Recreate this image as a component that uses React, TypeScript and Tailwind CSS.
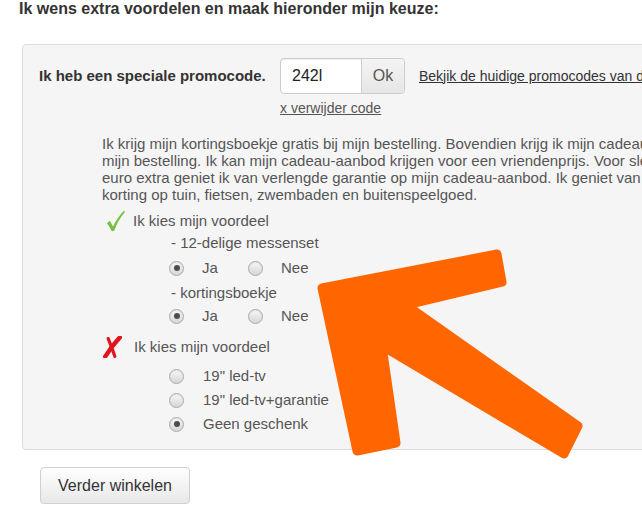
import React from 'react';

function Radio({ checked = false }: { checked?: boolean }) {
  return (
    <span className="inline-flex h-[15px] w-[15px] shrink-0 items-center justify-center rounded-full border border-[#a9a9a9] bg-linear-to-b from-[#f8f8f8] to-[#d6d6d6] shadow-[inset_0_1px_1px_rgba(0,0,0,0.08)]">
      {checked && <span className="h-[6px] w-[6px] rounded-full bg-[#4d4d4d]" />}
    </span>
  );
}

function Check() {
  return (
    <svg width="19" height="22" viewBox="0 0 19 22" className="shrink-0">
      <path
        d="M0.8 13.2 C2 12 3.2 11.3 4 11 C5 12.8 6 14.6 7 16.6 C10 10.6 13.6 5 18.2 0.6 C18.6 1.2 18.8 1.8 18.6 2.4 C14.2 7.6 10.6 13.6 8.2 20.8 C7.4 21.2 6.6 21.4 5.8 21.2 C4.4 18.4 2.8 15.6 0.8 13.2 Z"
        fill="#78c043"
      />
    </svg>
  );
}

function Cross() {
  return (
    <svg width="19" height="22" viewBox="0 0 19 22" className="shrink-0">
      <path d="M16.8 1.4 C11.5 7 6.5 13.5 2.2 20.6" stroke="#e3131b" strokeWidth="4.4" strokeLinecap="round" fill="none" />
      <path d="M5.2 2.6 C7.6 8.5 10 14.5 11.8 20.4" stroke="#e3131b" strokeWidth="3.2" strokeLinecap="round" fill="none" />
    </svg>
  );
}

function Arrow() {
  return (
    <svg
      width="642"
      height="509"
      viewBox="0 0 642 509"
      className="pointer-events-none absolute top-0 left-0"
    >
      <polygon
        points="322,288 497,254 502,282 406,305 578,426 564,454 382,346 396,443 357,451"
        fill="#ff6600"
        stroke="#ff6600"
        strokeWidth="9"
        strokeLinejoin="round"
      />
    </svg>
  );
}

export default function App() {
  return (
    <div className="relative h-[509px] w-[642px] overflow-hidden bg-white font-['Liberation_Sans',Arial,sans-serif]">
      <h2 className="pl-[19px] text-[16px] leading-[18px] font-bold text-[#333]">
        Ik wens extra voordelen en maak hieronder mijn keuze:
      </h2>

      <div className="mt-[26px] ml-[22px] w-[720px] rounded-[4px] border border-[#dcdcdc] bg-[#f5f5f5] pb-[14px]">
        <div className="flex items-center pt-[13px] pl-[16px]">
          <span className="w-[241px] text-[15px] font-bold text-[#333]">Ik heb een speciale promocode.</span>
          <div className="flex h-[36px] w-[125px] rounded-[4px] border border-[#cccccc] bg-white shadow-[inset_0_1px_1px_rgba(0,0,0,0.075)]">
            <span className="flex flex-1 items-center pl-[11px] text-[16px] text-[#222]">242l</span>
            <span className="flex w-[43px] items-center justify-center rounded-r-[4px] border-l border-[#d0d0d0] bg-linear-to-b from-[#f4f4f4] to-[#e6e6e6] text-[16px] text-[#555]">
              Ok
            </span>
          </div>
          <a className="ml-[14px] text-[14px] whitespace-nowrap text-[#333] underline">
            Bekjik de huidige promocodes van de webshop
          </a>
        </div>

        <div className="mt-[6px] pl-[257px] text-[14px] leading-[16px] text-[#555]">
          <a className="underline">x verwijder code</a>
        </div>

        <p className="mt-[19px] pl-[79px] text-[15px] leading-[17px] whitespace-nowrap text-[#555]">
          Ik krijg mijn kortingsboekje gratis bij mijn bestelling. Bovendien krijg ik mijn cadeau-aanbod bij
          <br />
          mijn bestelling. Ik kan mijn cadeau-aanbod krijgen voor een vriendenprijs. Voor slechts enkele
          <br />
          euro extra geniet ik van verlengde garantie op mijn cadeau-aanbod. Ik geniet van extra
          <br />
          korting op tuin, fietsen, zwembaden en buitenspeelgoed.
        </p>

        <div className="mt-[6px] text-[15px] text-[#555]">
          <div className="flex h-[24px] items-center pl-[83px]">
            <Check />
            <span className="ml-[8px]">Ik kies mijn voordeel</span>
          </div>
          <div className="flex h-[20px] items-center pl-[148px]">- 12-delige messenset</div>
          <div className="flex h-[30px] items-center pl-[146px]">
            <div className="flex w-[79px] items-center gap-[18px]">
              <Radio checked />
              <span>Ja</span>
            </div>
            <div className="flex items-center gap-[18px]">
              <Radio />
              <span>Nee</span>
            </div>
          </div>
          <div className="flex h-[20px] items-center pl-[148px]">- kortingsboekje</div>
          <div className="flex h-[26px] items-center pl-[146px]">
            <div className="flex w-[79px] items-center gap-[18px]">
              <Radio checked />
              <span>Ja</span>
            </div>
            <div className="flex items-center gap-[18px]">
              <Radio />
              <span>Nee</span>
            </div>
          </div>
          <div className="flex h-[36px] items-center pl-[80px]">
            <Cross />
            <span className="ml-[12px]">Ik kies mijn voordeel</span>
          </div>
          <div className="flex h-[22px] items-center gap-[19px] pl-[146px]">
            <Radio />
            <span>19" led-tv</span>
          </div>
          <div className="flex h-[26px] items-center gap-[19px] pl-[146px]">
            <Radio />
            <span>19" led-tv+garantie</span>
          </div>
          <div className="flex h-[22px] items-center gap-[19px] pl-[146px]">
            <Radio checked />
            <span>Geen geschenk</span>
          </div>
        </div>
      </div>

      <div className="mt-[17px] pl-[40px]">
        <button className="h-[37px] w-[150px] rounded-[4px] border border-[#cfcfcf] bg-linear-to-b from-[#ffffff] to-[#e8e8e8] text-[16px] text-[#333]">
          Verder winkelen
        </button>
      </div>

      <Arrow />
    </div>
  );
}
